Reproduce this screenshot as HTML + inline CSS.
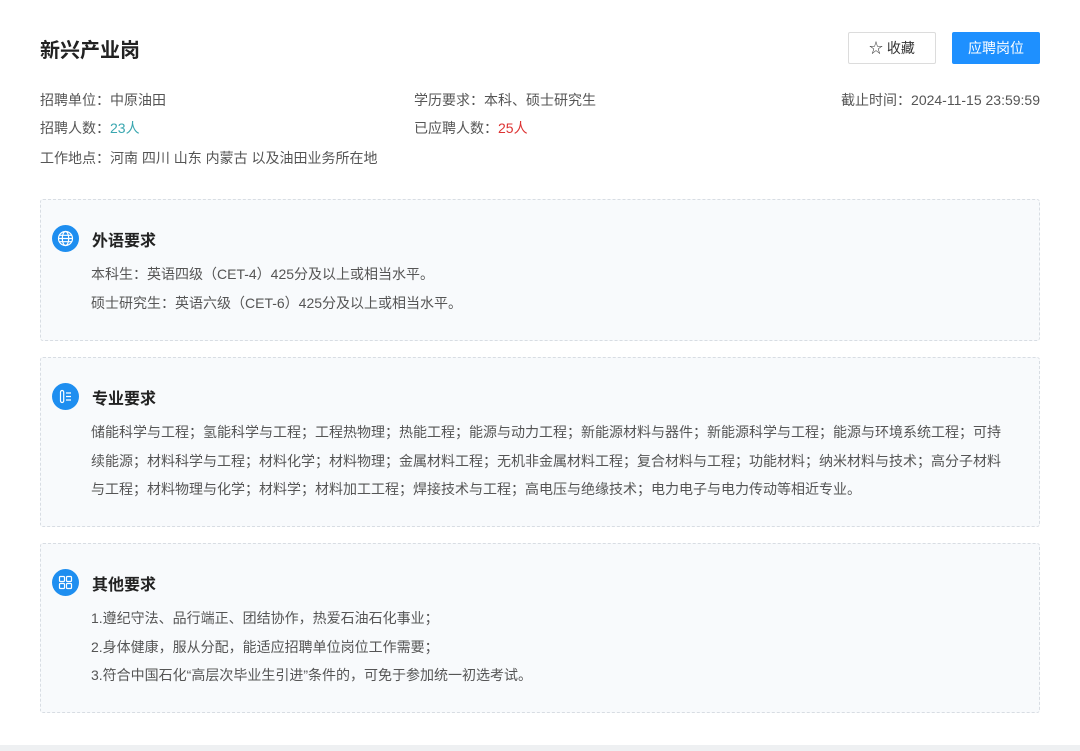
<!DOCTYPE html>
<html><head><meta charset="utf-8"><style>
*{margin:0;padding:0;box-sizing:border-box}
body{width:1080px;height:751px;background:#fff;font-family:"Liberation Sans","Noto Sans CJK SC",sans-serif;color:#555;font-size:14px;position:relative;overflow:hidden}
.title{position:absolute;left:40px;top:34px;font-size:20px;font-weight:bold;color:#222}
.btn1{position:absolute;left:848px;top:32px;width:88px;height:32px;border:1px solid #dcdcdc;border-radius:2px;text-align:center;line-height:30px;color:#333;font-size:14px}
.btn2{position:absolute;left:952px;top:32px;width:88px;height:32px;background:#1e90ff;border-radius:2px;text-align:center;line-height:32px;color:#fff;font-size:14px}
.r{position:absolute;font-size:14px;color:#555;white-space:nowrap}
.box{position:absolute;left:40px;width:1000px;background:#f8fafc;border:1px dashed #d8dde3;border-radius:3px}
.ic{position:absolute;left:11px;width:27px;height:27px;border-radius:50%;background:#1e8ef0}
.h{position:absolute;left:51px;font-size:16px;font-weight:bold;color:#222}
.t{position:absolute;left:50px;right:34px;font-size:14px;color:#555;line-height:28.5px}
.foot{position:absolute;left:0;top:745px;width:1080px;height:6px;background:#eef0f2}
</style></head><body>
<div class="title">新兴产业岗</div>
<div class="btn1">☆ 收藏</div>
<div class="btn2">应聘岗位</div>
<div class="r" style="left:40px;top:90px">招聘单位：中原油田</div>
<div class="r" style="left:414px;top:90px">学历要求：本科、硕士研究生</div>
<div class="r" style="right:40px;top:90px">截止时间：2024-11-15 23:59:59</div>
<div class="r" style="left:40px;top:118px">招聘人数：<span style="color:#3aa7b0">23人</span></div>
<div class="r" style="left:414px;top:118px">已应聘人数：<span style="color:#d33">25人</span></div>
<div class="r" style="left:40px;top:148px">工作地点：河南 四川 山东 内蒙古 以及油田业务所在地</div>

<div class="box" style="top:199px;height:142px">
<div class="ic" style="top:25px"><svg width="27" height="27" viewBox="0 0 27 27" fill="none" stroke="#fff" stroke-width="1.2"><circle cx="13.5" cy="13.5" r="7"/><ellipse cx="13.5" cy="13.5" rx="3.2" ry="7"/><path d="M6.5 13.5h14M7.5 10.3h12M7.5 16.7h12"/></svg></div>
<div class="h" style="top:27px">外语要求</div>
<div class="t" style="top:60px">本科生：英语四级（CET-4）425分及以上或相当水平。<br>硕士研究生：英语六级（CET-6）425分及以上或相当水平。</div>
</div>

<div class="box" style="top:357px;height:170px">
<div class="ic" style="top:25px"><svg width="27" height="27" viewBox="0 0 27 27" fill="none" stroke="#fff" stroke-width="1.2"><rect x="8.5" y="7.5" width="3.2" height="12" rx="1.6"/><path d="M14 10h5M14 13.5h5M14 17h5"/></svg></div>
<div class="h" style="top:27px">专业要求</div>
<div class="t" style="top:60px">储能科学与工程；氢能科学与工程；工程热物理；热能工程；能源与动力工程；新能源材料与器件；新能源科学与工程；能源与环境系统工程；可持续能源；材料科学与工程；材料化学；材料物理；金属材料工程；无机非金属材料工程；复合材料与工程；功能材料；纳米材料与技术；高分子材料与工程；材料物理与化学；材料学；材料加工工程；焊接技术与工程；高电压与绝缘技术；电力电子与电力传动等相近专业。</div>
</div>

<div class="box" style="top:543px;height:170px">
<div class="ic" style="top:25px"><svg width="27" height="27" viewBox="0 0 27 27" fill="none" stroke="#fff" stroke-width="1.2"><rect x="7.5" y="7.5" width="5" height="5" rx="1"/><rect x="14.5" y="7.5" width="5" height="5" rx="1"/><rect x="7.5" y="14.5" width="5" height="5" rx="1"/><rect x="14.5" y="14.5" width="5" height="5" rx="1"/></svg></div>
<div class="h" style="top:27px">其他要求</div>
<div class="t" style="top:60px">1.遵纪守法、品行端正、团结协作，热爱石油石化事业；<br>2.身体健康，服从分配，能适应招聘单位岗位工作需要；<br>3.符合中国石化“高层次毕业生引进”条件的，可免于参加统一初选考试。</div>
</div>
<div class="foot"></div>
</body></html>
